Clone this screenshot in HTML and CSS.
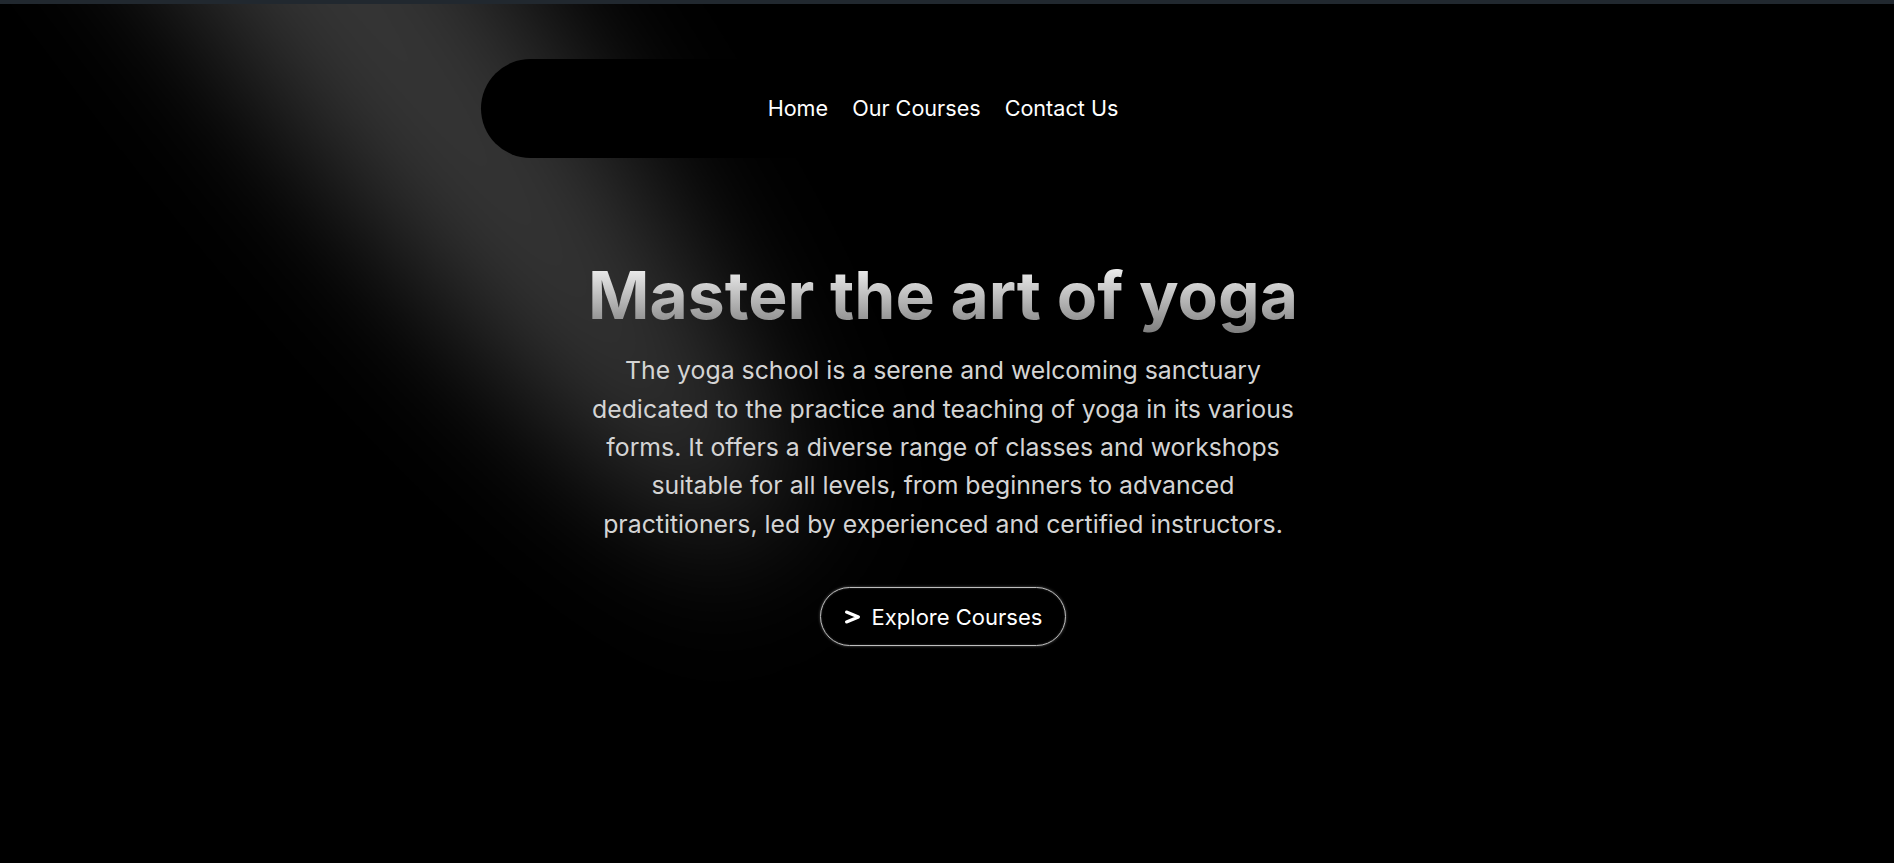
FILE: index.html
```html
<!DOCTYPE html>
<html lang="en">
<head>
<meta charset="utf-8">
<title>Yoga School</title>
<link rel="stylesheet" href="styles.css">
</head>
<body>
<div class="topbar"></div>
<svg class="spotlight" width="1894" height="863" viewBox="0 0 1894 863" aria-hidden="true">
  <defs>
    <filter id="blur" filterUnits="userSpaceOnUse" x="-1000" y="-1200" width="3200" height="2600">
      <feGaussianBlur stdDeviation="70"/>
    </filter>
  </defs>
  <ellipse cx="286" cy="-99" rx="800" ry="135" transform="rotate(53 286 -99)" fill="#ffffff" fill-opacity="0.21" filter="url(#blur)"/>
</svg>
<div class="page">
  <nav class="navbar">
    <ul class="nav-links">
      <li><a href="#">Home</a></li>
      <li><a href="#">Our Courses</a></li>
      <li><a href="#">Contact Us</a></li>
    </ul>
  </nav>
  <main class="hero">
    <h1 class="hero-title">Master the art of yoga</h1>
    <p class="hero-text">The yoga school is a serene and welcoming sanctuary dedicated to the practice and teaching of yoga in its various forms. It offers a diverse range of classes and workshops suitable for all levels, from beginners to advanced practitioners, led by experienced and certified instructors.</p>
    <a class="cta" href="#">
      <svg class="cta-icon" width="17" height="14" viewBox="0 0 17 14" aria-hidden="true"><polyline points="2.5,2 14.5,7 2.5,12" fill="none" stroke="#ffffff" stroke-width="3" stroke-linecap="round" stroke-linejoin="round"/></svg>
      <span>Explore Courses</span>
    </a>
  </main>
</div>
</body>
</html>
```
FILE: styles.css
```css
* { box-sizing: border-box; }
html, body { margin: 0; padding: 0; }
body {
  background: #000000;
  color: #ffffff;
  font-family: Inter, "Noto Sans", sans-serif;
  min-height: 863px;
  overflow: hidden;
  position: relative;
}
.topbar {
  height: 4px;
  background: #21282f;
  position: relative;
  z-index: 2;
}
.spotlight {
  position: absolute;
  top: 0;
  left: 0;
  pointer-events: none;
  z-index: 0;
}
.page {
  position: relative;
  z-index: 1;
  padding-right: 8px;
  display: flex;
  flex-direction: column;
  align-items: center;
}
.navbar {
  margin-top: 55px;
  width: 924px;
  height: 99px;
  padding-bottom: 2px;
  border-radius: 50px;
  background: #000000;
  display: flex;
  align-items: center;
  justify-content: center;
}
.nav-links {
  list-style: none;
  margin: 0;
  padding: 0;
  display: flex;
  gap: 24px;
}
.nav-links a {
  color: #ffffff;
  text-decoration: none;
  font-size: 21.6px;
  line-height: 26px;
}
.hero {
  display: flex;
  flex-direction: column;
  align-items: center;
  margin-top: 98px;
}
.hero-title {
  margin: 0;
  font-size: 66px;
  font-weight: 700;
  line-height: 1.2;
  background: linear-gradient(to bottom, #f5f5f5 10%, #7a7a7a 100%);
  -webkit-background-clip: text;
  background-clip: text;
  color: transparent;
  -webkit-text-fill-color: transparent;
}
.hero-text {
  margin: 16px 0 0;
  max-width: 715px;
  text-align: center;
  font-size: 24.8px;
  line-height: 38.4px;
  color: #d4d4d4;
}
.cta {
  margin-top: 44px;
  height: 59px;
  padding: 0 23px;
  display: inline-flex;
  align-items: center;
  gap: 11px;
  border-radius: 30px;
  background: #000000;
  border: 1.5px solid #bdbdbd;
  box-shadow: 0 0 3px rgba(255,255,255,0.35), inset 0 0 2px rgba(255,255,255,0.25);
  color: #ffffff;
  text-decoration: none;
  font-size: 22px;
  line-height: 26px;
}
.cta-icon { display: block; }
```
